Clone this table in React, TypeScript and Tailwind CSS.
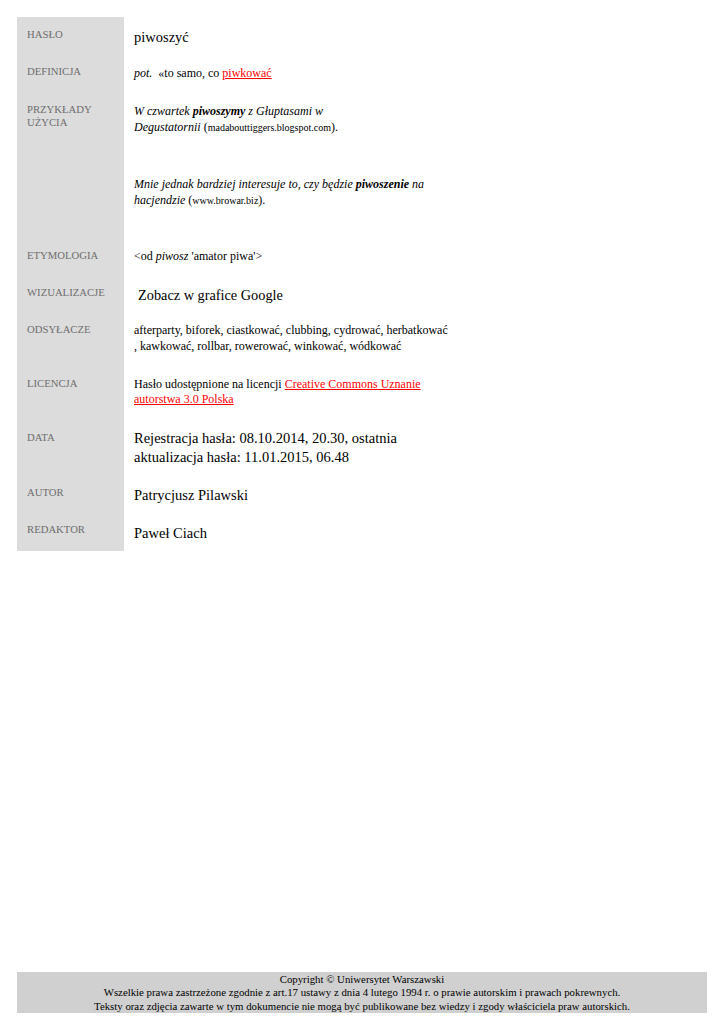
import React from "react";

const serif = { fontFamily: '"Liberation Serif", "Times New Roman", serif' };

function Row({
  label,
  h,
  children,
}: {
  label: React.ReactNode;
  h: string;
  children: React.ReactNode;
}) {
  return (
    <div className={`flex ${h}`}>
      <div className="w-[107px] shrink-0 bg-[#dcdcdc] pl-[10px] pt-[10.5px] text-[10.7px] leading-[13px] text-[#6e6e6e] uppercase">
        {label}
      </div>
      <div className="pl-[10px] text-black">{children}</div>
    </div>
  );
}

const Link = ({ children }: { children: React.ReactNode }) => (
  <a className="text-[#ff0000] underline decoration-1 underline-offset-[1px]" href="#">
    {children}
  </a>
);

export default function App() {
  return (
    <div style={serif} className="bg-white h-[1024px] w-[725px] flex flex-col pt-[17px] pl-[17px]">
      <div className="flex flex-col">
        <Row label="HASŁO" h="h-[37px]">
          <div className="pt-[11px] text-[14.5px] leading-[18px]">piwoszyć</div>
        </Row>
        <Row label="DEFINICJA" h="h-[38px]">
          <div className="pt-[11.5px] text-[12px] leading-[15px]">
            <i>pot.</i>&nbsp; «to samo, co <Link>piwkować</Link>
          </div>
        </Row>
        <Row
          label={
            <>
              PRZYKŁADY
              <br />
              UŻYCIA
            </>
          }
          h="h-[146px]"
        >
          <div className="pt-[12px] text-[12px] leading-[15.5px]">
            <div>
              <i>
                W czwartek <b>piwoszymy</b> z Głuptasami w
              </i>
              <br />
              <i>Degustatornii</i> (<span className="text-[10px]">madabouttiggers.blogspot.com</span>).
            </div>
            <div className="mt-[42px]">
              <i>
                Mnie jednak bardziej interesuje to, czy będzie <b>piwoszenie</b> na
              </i>
              <br />
              <i>hacjendzie</i> (<span className="text-[10px]">www.browar.biz</span>).
            </div>
          </div>
        </Row>
        <Row label="ETYMOLOGIA" h="h-[37px]">
          <div className="pt-[10.5px] text-[12px] leading-[15px]">
            &lt;od <i>piwosz</i> 'amator piwa'&gt;
          </div>
        </Row>
        <Row label="WIZUALIZACJE" h="h-[37px]">
          <div className="pt-[11px] pl-[4px] text-[14.3px] leading-[18px]">Zobacz w grafice Google</div>
        </Row>
        <Row label="ODSYŁACZE" h="h-[54px]">
          <div className="pt-[9.5px] text-[12px] leading-[16.5px]">
            afterparty, biforek, ciastkować, clubbing, cydrować, herbatkować
            <br />, kawkować, rollbar, rowerować, winkować, wódkować
          </div>
        </Row>
        <Row label="LICENCJA" h="h-[54px]">
          <div className="pt-[11px] text-[12px] leading-[15px]">
            Hasło udostępnione na licencji <Link>Creative Commons Uznanie</Link>
            <br />
            <Link>autorstwa 3.0 Polska</Link>
          </div>
        </Row>
        <Row label="DATA" h="h-[55px]">
          <div className="pt-[8.5px] text-[14.5px] leading-[19px]">
            Rejestracja hasła: 08.10.2014, 20.30, ostatnia
            <br />
            aktualizacja hasła: 11.01.2015, 06.48
          </div>
        </Row>
        <Row label="AUTOR" h="h-[37px]">
          <div className="pt-[11px] text-[14.5px] leading-[18px]">Patrycjusz Pilawski</div>
        </Row>
        <Row label="REDAKTOR" h="h-[39px]">
          <div className="pt-[11.5px] text-[14.5px] leading-[18px]">Paweł Ciach</div>
        </Row>
      </div>
      <div className="mt-auto mb-[11px] w-[690px] h-[41px] bg-[#d0d0d0] pt-[0.5px] text-center text-[10.8px] leading-[13.5px] text-black">
        Copyright © Uniwersytet Warszawski
        <br />
        Wszelkie prawa zastrzeżone zgodnie z art.17 ustawy z dnia 4 lutego 1994 r. o prawie autorskim i prawach pokrewnych.
        <br />
        Teksty oraz zdjęcia zawarte w tym dokumencie nie mogą być publikowane bez wiedzy i zgody właściciela praw autorskich.
      </div>
    </div>
  );
}
